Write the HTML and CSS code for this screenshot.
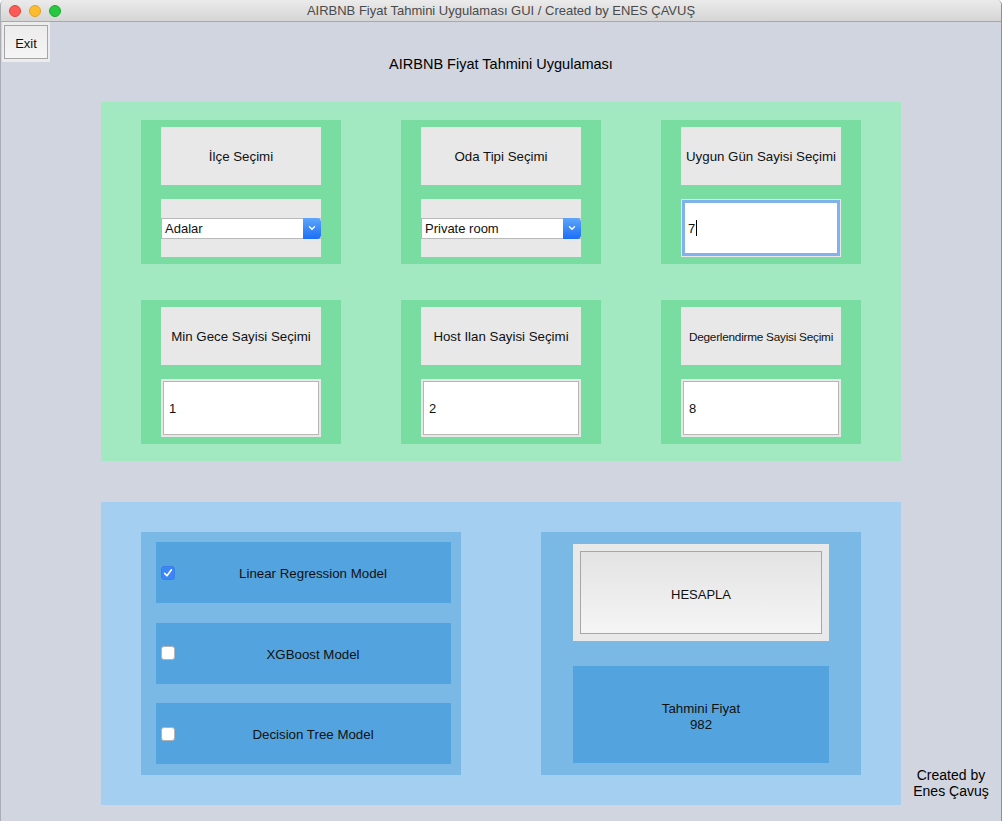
FILE: index.html
```html
<!DOCTYPE html>
<html>
<head>
<meta charset="utf-8">
<link rel="stylesheet" href="styles.css">
</head>
<body>
<div class="window">
  <div class="titlebar">
    <div class="lights">
      <span class="light red"></span>
      <span class="light yellow"></span>
      <span class="light green"></span>
    </div>
    <div class="wintitle">AIRBNB Fiyat Tahmini Uygulaması GUI / Created by ENES ÇAVUŞ</div>
  </div>
  <div class="header">
    <div class="exit-wrap"><div class="exit-btn">Exit</div></div>
    <div class="app-title">AIRBNB Fiyat Tahmini Uygulaması</div>
  </div>

  <div class="green-panel">
    <div class="cell">
      <div class="label">İlçe Seçimi</div>
      <div class="field combo-field">
        <div class="combo"><span class="combo-text">Adalar</span><span class="combo-btn"><svg width="10" height="8" viewBox="0 0 10 8"><path d="M2.5 2.8 L5 5.2 L7.5 2.8" fill="none" stroke="#fff" stroke-width="1.4" stroke-linecap="round" stroke-linejoin="round"/></svg></span></div>
      </div>
    </div>
    <div class="cell">
      <div class="label">Oda Tipi Seçimi</div>
      <div class="field combo-field">
        <div class="combo"><span class="combo-text">Private room</span><span class="combo-btn"><svg width="10" height="8" viewBox="0 0 10 8"><path d="M2.5 2.8 L5 5.2 L7.5 2.8" fill="none" stroke="#fff" stroke-width="1.4" stroke-linecap="round" stroke-linejoin="round"/></svg></span></div>
      </div>
    </div>
    <div class="cell">
      <div class="label">Uygun Gün Sayisi Seçimi</div>
      <div class="field focus-field">
        <div class="entry focused">7<span class="caret"></span></div>
      </div>
    </div>
    <div class="cell">
      <div class="label">Min Gece Sayisi Seçimi</div>
      <div class="field"><div class="entry">1</div></div>
    </div>
    <div class="cell">
      <div class="label">Host Ilan Sayisi Seçimi</div>
      <div class="field"><div class="entry">2</div></div>
    </div>
    <div class="cell">
      <div class="label small">Degerlendirme Sayisi Seçimi</div>
      <div class="field"><div class="entry">8</div></div>
    </div>
  </div>

  <div class="bottom-row">
    <div class="blue-panel">
      <div class="models">
        <div class="model-row">
          <span class="check checked"><svg width="14" height="14" viewBox="0 0 14 14"><path d="M3.6 7.4 L6 9.8 L10.4 3.8" fill="none" stroke="#fff" stroke-width="1.6" stroke-linecap="round" stroke-linejoin="round"/></svg></span>
          <span class="model-text">Linear Regression Model</span>
        </div>
        <div class="model-row">
          <span class="check"></span>
          <span class="model-text">XGBoost Model</span>
        </div>
        <div class="model-row">
          <span class="check"></span>
          <span class="model-text">Decision Tree Model</span>
        </div>
      </div>
      <div class="calc">
        <div class="calc-wrap"><div class="calc-btn">HESAPLA</div></div>
        <div class="result">Tahmini Fiyat<br>982</div>
      </div>
    </div>
    <div class="credit">Created by<br>Enes Çavuş</div>
  </div>
</div>
</body>
</html>
```

FILE: styles.css
```css
* { box-sizing: border-box; }
html, body { margin: 0; padding: 0; background: #ffffff; }
body { font-family: "Liberation Sans", Arial, sans-serif; font-size: 13px; color: #1a1a1a; }

.window {
  width: 1002px;
  height: 821px;
  background: #d1d5df;
  border-radius: 5px 5px 0 0;
  overflow: hidden;
  border-left: 1px solid #a9acb3;
  border-right: 1px solid #8e9096;
  display: flex;
  flex-direction: column;
}

.titlebar {
  height: 22px;
  flex: 0 0 22px;
  background: linear-gradient(#ebebeb, #d5d5d5);
  border-bottom: 1px solid #a8a8a8;
  display: flex;
  align-items: center;
}
.lights { display: flex; gap: 8px; padding-left: 8px; }
.light { width: 12px; height: 12px; border-radius: 50%; display: block; }
.light.red { background: #fd5b55; border: 1px solid #e0443e; }
.light.yellow { background: #fdbc2e; border: 1px solid #dea123; }
.light.green { background: #27c840; border: 1px solid #1aab29; }
.wintitle {
  flex: 1;
  text-align: center;
  color: #4a4a4a;
  font-size: 13px;
  margin-left: -60px;
}

.header {
  display: grid;
  height: 50px;
  flex: 0 0 50px;
}
.exit-wrap, .app-title { grid-area: 1 / 1; }
.exit-wrap {
  justify-self: start;
  align-self: start;
  width: 48px;
  height: 40px;
  margin-left: 1px;
  background: #ececec;
  padding: 3px 2px;
}
.exit-btn {
  width: 44px;
  height: 34px;
  border: 1px solid #a6a6a6;
  background: linear-gradient(#ececec, #f5f5f5);
  display: flex;
  align-items: center;
  justify-content: center;
  padding-top: 2px;
  font-size: 13px;
  color: #111;
}
.app-title {
  justify-self: center;
  align-self: end;
  font-size: 14.5px;
  color: #000;
  line-height: 16px;
}

.green-panel {
  margin: 30px 0 0 100px;
  width: 800px;
  height: 359px;
  background: #a2e8c0;
  padding: 18px 40px 0 40px;
  display: grid;
  grid-template-columns: 200px 200px 200px;
  grid-template-rows: 144px 144px;
  column-gap: 60px;
  row-gap: 36px;
}
.cell {
  background: #79dca1;
  padding: 7px 20px;
  display: flex;
  flex-direction: column;
  gap: 14px;
}
.label {
  height: 58px;
  background: #e8e8e8;
  display: flex;
  align-items: center;
  justify-content: center;
  padding-top: 1px;
  font-size: 13.3px;
  color: #111;
  white-space: nowrap;
}
.label.small { font-size: 11.8px; letter-spacing: -0.25px; }
.field {
  height: 58px;
  background: #e8e8e8;
  padding: 2px;
}
.combo-field { display: flex; align-items: center; padding: 0; }
.combo {
  width: 160px;
  height: 21px;
  display: flex;
  background: #fff;
  border: 1px solid #b9b9b9;
  border-right: none;
}
.combo-text { flex: 1; padding-left: 3px; line-height: 19px; font-size: 13px; color: #111; }
.combo-btn {
  width: 18px;
  margin-top: -1px;
  margin-bottom: -1px;
  background: linear-gradient(#5ea6fb, #1a6ff5);
  border-radius: 0 4px 4px 0;
  display: flex;
  align-items: center;
  justify-content: center;
}
.entry {
  height: 100%;
  background: #fff;
  border: 1px solid #b6b6b6;
  display: flex;
  align-items: center;
  padding-left: 5px;
  font-size: 13px;
  color: #111;
}
.focus-field { padding: 1px; }
.entry.focused {
  border: 3px solid #80b2ec;
  padding-left: 3px;
}
.caret { display: inline-block; width: 1px; height: 16px; background: #000; margin-left: 1px; }

.bottom-row {
  display: flex;
  margin-top: 41px;
}
.blue-panel {
  margin-left: 100px;
  width: 800px;
  height: 303px;
  background: #a5cff0;
  padding: 30px 40px;
  display: flex;
  gap: 80px;
}
.models {
  width: 320px;
  height: 243px;
  background: #7ab8e6;
  padding: 10px 10px 0 15px;
  display: flex;
  flex-direction: column;
  gap: 19.5px;
}
.model-row {
  height: 61px;
  background: #53a3de;
  display: flex;
  align-items: center;
  padding-left: 5px;
}
.check {
  width: 14px;
  height: 14px;
  border-radius: 3px;
  background: #fff;
  border: 1px solid #b3b3b3;
  display: flex;
}
.check.checked { background: #3a86f6; border: 1px solid #3a7ee8; }
.check.checked svg { margin: -1px; }
.model-text { flex: 1; text-align: center; font-size: 13.3px; color: #111; padding-top: 2px; }

.calc {
  width: 320px;
  height: 243px;
  background: #7ab8e6;
  padding: 12px 32px;
  display: flex;
  flex-direction: column;
  gap: 25px;
}
.calc-wrap {
  height: 97px;
  background: #e9e9e9;
  padding: 7px;
}
.calc-btn {
  height: 100%;
  border: 1px solid #a7a7a7;
  background: linear-gradient(#e3e3e3, #f5f5f5);
  display: flex;
  align-items: center;
  justify-content: center;
  padding-top: 3px;
  font-size: 13px;
  color: #111;
}
.result {
  height: 97px;
  background: #53a3de;
  display: flex;
  align-items: center;
  justify-content: center;
  text-align: center;
  padding-top: 4px;
  font-size: 13.3px;
  line-height: 16px;
  color: #111;
}

.credit {
  flex: 1;
  align-self: flex-end;
  text-align: center;
  font-size: 14px;
  line-height: 16px;
  color: #000;
  margin-bottom: 6px;
}
```
